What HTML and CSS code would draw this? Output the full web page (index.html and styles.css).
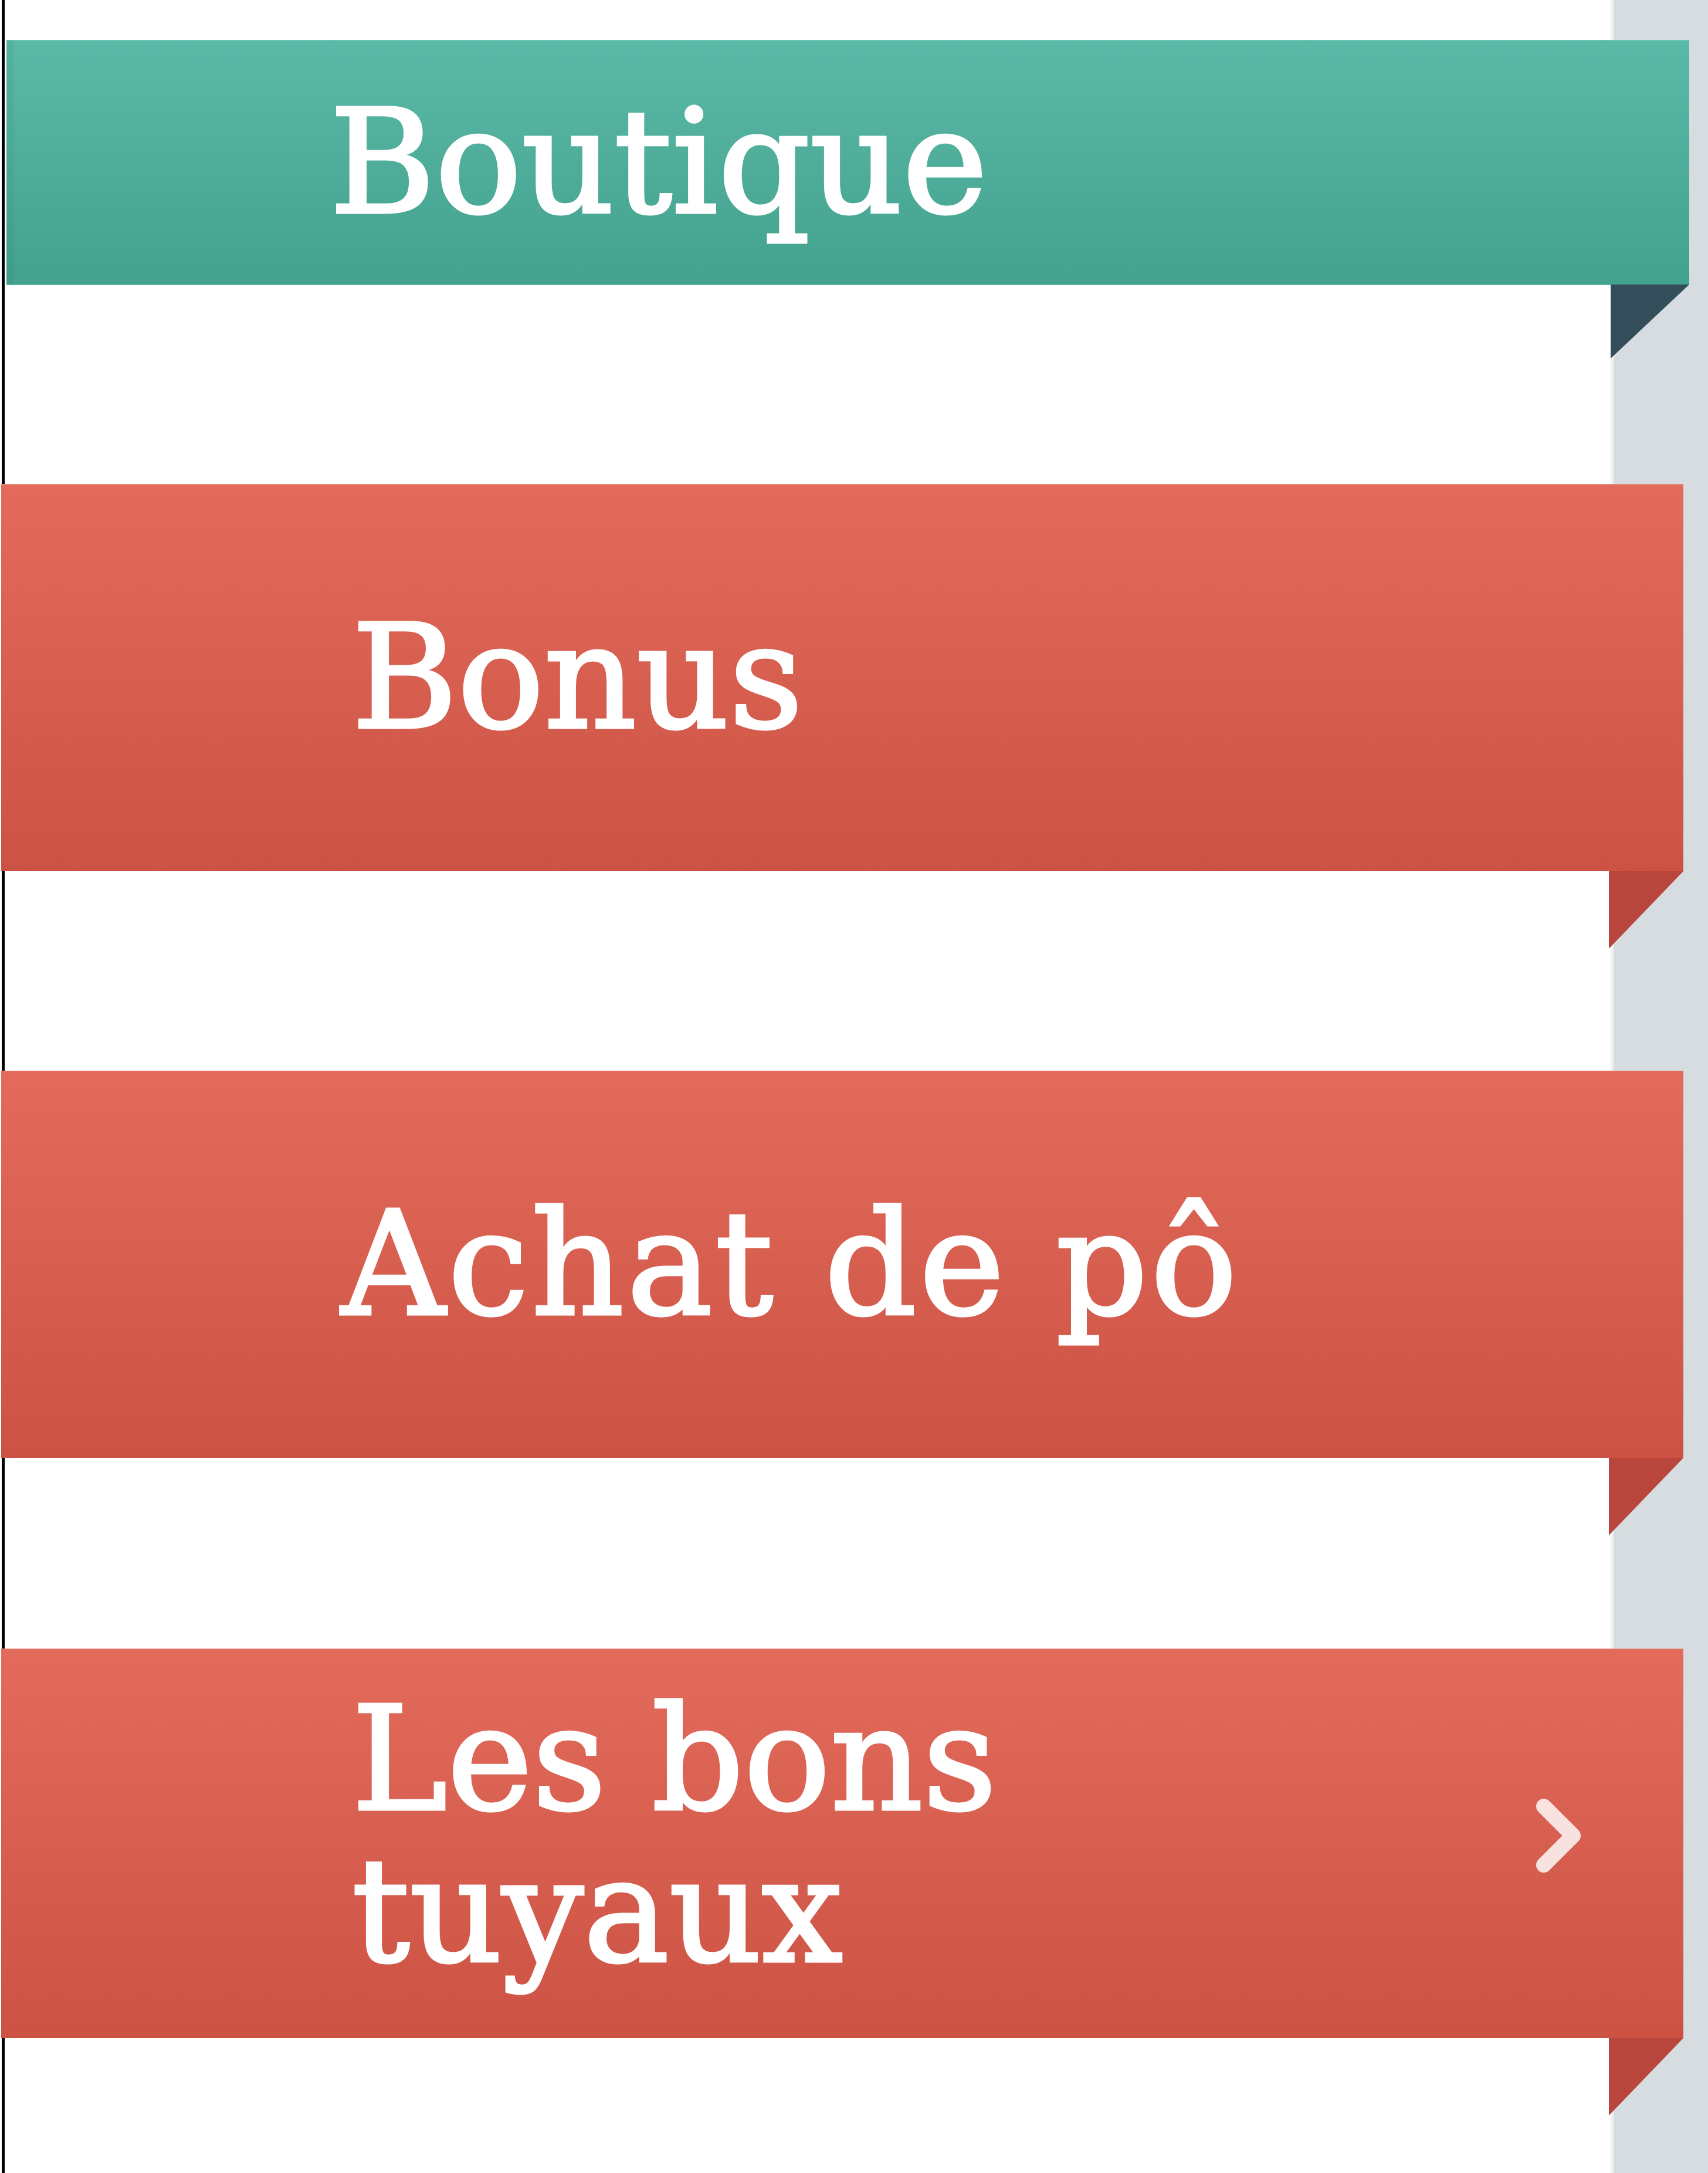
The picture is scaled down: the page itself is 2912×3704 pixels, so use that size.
FILE: index.html
```html
<!DOCTYPE html>
<html lang="fr">
<head>
<meta charset="utf-8">
<title>Menu</title>
<link rel="stylesheet" href="styles.css">
</head>
<body>
<div class="page">
  <nav class="menu">
    <a class="item item--teal" href="#"><span class="label">Boutique</span></a>
    <a class="item item--red" href="#"><span class="label">Bonus</span></a>
    <a class="item item--red" href="#"><span class="label label--wide">Achat de pô</span></a>
    <a class="item item--red item--tips" href="#">
      <span class="label">Les bons tuyaux</span>
      <svg class="chev" viewBox="0 0 100 140" width="100" height="140" aria-hidden="true">
        <path d="M22 20 L72 70 L22 120" fill="none" stroke="rgba(255,255,255,0.82)" stroke-width="26" stroke-linecap="round" stroke-linejoin="round"/>
      </svg>
    </a>
  </nav>
</div>
</body>
</html>
```

FILE: styles.css
```css
html, body {
  margin: 0;
  padding: 0;
  background: #fff;
}

.page {
  width: 2912px;
  min-height: 3704px;
  box-sizing: border-box;
  padding-top: 68px;
  background: linear-gradient(to right,
    #fff 0, #fff 3px,
    #000 3px, #000 8px,
    #fff 8px, #fff 2746px,
    #eef2f3 2746px, #eef2f3 2751px,
    #d6dcdf 2751px, #d6dcdf 100%);
}

.menu {
  display: flex;
  flex-direction: column;
  gap: 340px;
}

.item {
  position: relative;
  display: flex;
  align-items: center;
  box-sizing: border-box;
  color: #fff;
  text-decoration: none;
  font-family: "DejaVu Serif", "Liberation Serif", serif;
  font-size: 245px;
  line-height: 259px;
  -webkit-text-stroke: 5px #fff;
}

.item::after {
  content: "";
  position: absolute;
  top: 100%;
  right: 0;
  clip-path: polygon(0 0, 100% 0, 0 100%);
}

.item--teal {
  margin-left: 11px;
  width: 2869px;
  height: 418px;
  padding-left: 551px;
  margin-bottom: -1px;
  background: linear-gradient(#5bb9a7, #43a28e);
  border-top: 1px solid #7ccfbf;
  border-bottom: 1px solid #6fcab8;
  box-shadow: inset 13px 0 0 rgba(0, 60, 40, 0.05);
}

.item--teal::after {
  width: 134px;
  height: 126px;
  background: #344d5b;
}

.item--red {
  margin-left: 2px;
  width: 2868px;
  height: 660px;
  padding-left: 598px;
  padding-right: 160px;
  background: linear-gradient(#e36b5c, #cc5344);
  border-top: 1px solid #e8938a;
}

.item--red::after {
  width: 127px;
  height: 132px;
  background: #b8463c;
}

.item--tips {
  margin-top: -15px;
  height: 664px;
  padding-bottom: 28px;
}

.label {
  display: block;
  max-width: 1720px;
}

.label--wide {
  margin-left: -18px;
  letter-spacing: 0.02em;
}

.chev {
  display: block;
  margin-left: auto;
  flex: none;
}
```
